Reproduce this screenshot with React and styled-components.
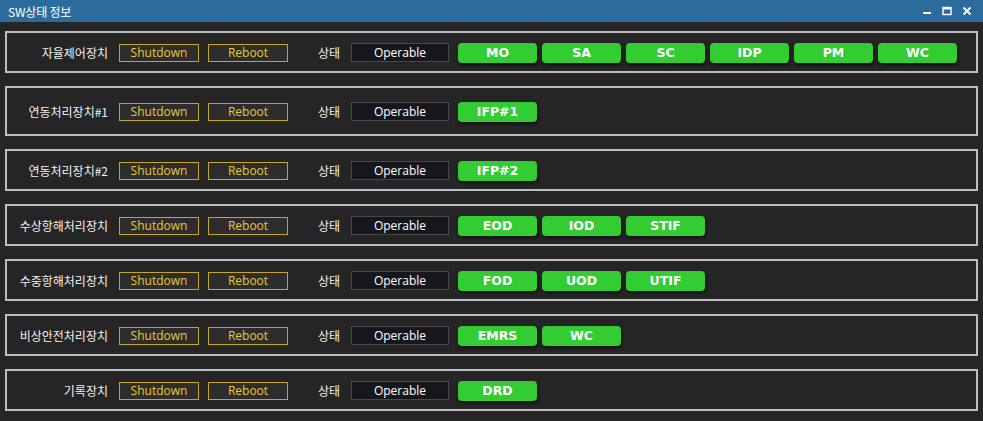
import React from "react";
import styled, { createGlobalStyle } from "styled-components";

const Global = createGlobalStyle`
  html, body {
    margin: 0;
    padding: 0;
    background: #252525;
  }
  body {
    font-family: "Noto Sans CJK KR", "Noto Sans", sans-serif;
  }
`;

const Window = styled.div`
  width: 983px;
  height: 421px;
  background: #252525;
  display: flex;
  flex-direction: column;
  overflow: hidden;
`;

const TitleBar = styled.div`
  height: 22px;
  background: #2b6c9c;
  display: flex;
  align-items: center;
  justify-content: space-between;
  padding: 0 8px;
  color: #fff;
  font-size: 12px;
`;

const Title = styled.span`
  font-family: "Noto Sans CJK KR", sans-serif;
  letter-spacing: -0.2px;
`;

const WinControls = styled.div`
  display: flex;
  align-items: center;
  gap: 10px;
  margin-right: 3px;
`;

const Content = styled.div`
  display: flex;
  flex-direction: column;
  gap: 13px;
  padding: 9px 5px 0 5px;
`;

const Panel = styled.div`
  box-sizing: border-box;
  height: ${(p) => p.$h}px;
  border: 2px solid #bdbdbd;
  display: flex;
  align-items: center;
  padding-top: 1px;
`;

const Label = styled.div`
  width: 101px;
  flex: none;
  text-align: right;
  color: #f2f2f2;
  font-size: 12px;
  margin-right: 11px;
  white-space: nowrap;
`;

const CmdButton = styled.div`
  box-sizing: border-box;
  flex: none;
  width: 80px;
  height: 18px;
  border: 1px solid #c9a524;
  background: #2d2d2d;
  color: #eac834;
  font-family: "Open Sans", "Noto Sans", sans-serif;
  font-size: 12px;
  display: flex;
  align-items: center;
  justify-content: center;
  margin-right: ${(p) => p.$mr}px;
`;

const StateLabel = styled.div`
  flex: none;
  color: #f2f2f2;
  font-size: 12px;
  width: 24px;
  margin-right: 9px;
  white-space: nowrap;
`;

const StateBox = styled.div`
  box-sizing: border-box;
  flex: none;
  width: 98px;
  height: 19px;
  background: #16171d;
  border: 1px solid #484848;
  color: #fff;
  font-family: "Open Sans", "Noto Sans", sans-serif;
  font-size: 12px;
  display: flex;
  align-items: center;
  justify-content: center;
  margin-right: 9px;
`;

const Chips = styled.div`
  display: flex;
  gap: 5px;
`;

const Chip = styled.div`
  width: 79px;
  height: 20px;
  border-radius: 4px;
  background: #33cc33;
  box-shadow: 1px 2px 3px rgba(0, 0, 0, 0.6);
  color: #fff;
  font-family: "DejaVu Sans", Verdana, sans-serif;
  font-weight: bold;
  font-size: 12.5px;
  display: flex;
  align-items: center;
  justify-content: center;
`;

const rows = [
  { name: "자율제어장치", chips: ["MO", "SA", "SC", "IDP", "PM", "WC"] },
  { name: "연동처리장치#1", chips: ["IFP#1"], h: 50 },
  { name: "연동처리장치#2", chips: ["IFP#2"] },
  { name: "수상항해처리장치", chips: ["EOD", "IOD", "STIF"] },
  { name: "수중항해처리장치", chips: ["FOD", "UOD", "UTIF"] },
  { name: "비상안전처리장치", chips: ["EMRS", "WC"] },
  { name: "기록장치", chips: ["DRD"] },
];

const App = () => (
  <Window>
    <Global />
    <TitleBar>
      <Title>SW상태 정보</Title>
      <WinControls>
        <svg width="10" height="10" viewBox="0 0 10 10">
          <rect x="1" y="6" width="8" height="2" fill="#fff" />
        </svg>
        <svg width="10" height="10" viewBox="0 0 10 10">
          <rect x="1" y="1.5" width="8" height="7" fill="none" stroke="#fff" strokeWidth="1.4" />
          <rect x="1" y="1.5" width="8" height="2" fill="#fff" />
        </svg>
        <svg width="10" height="10" viewBox="0 0 10 10">
          <path d="M1.5 1.5 L8.5 8.5 M8.5 1.5 L1.5 8.5" stroke="#fff" strokeWidth="1.8" />
        </svg>
      </WinControls>
    </TitleBar>
    <Content>
      {rows.map((r) => (
        <Panel key={r.name} $h={r.h || 42}>
          <Label>{r.name}</Label>
          <CmdButton $mr={9}>Shutdown</CmdButton>
          <CmdButton $mr={30}>Reboot</CmdButton>
          <StateLabel>상태</StateLabel>
          <StateBox>Operable</StateBox>
          <Chips>
            {r.chips.map((c) => (
              <Chip key={c}>{c}</Chip>
            ))}
          </Chips>
        </Panel>
      ))}
    </Content>
  </Window>
);

export default App;
